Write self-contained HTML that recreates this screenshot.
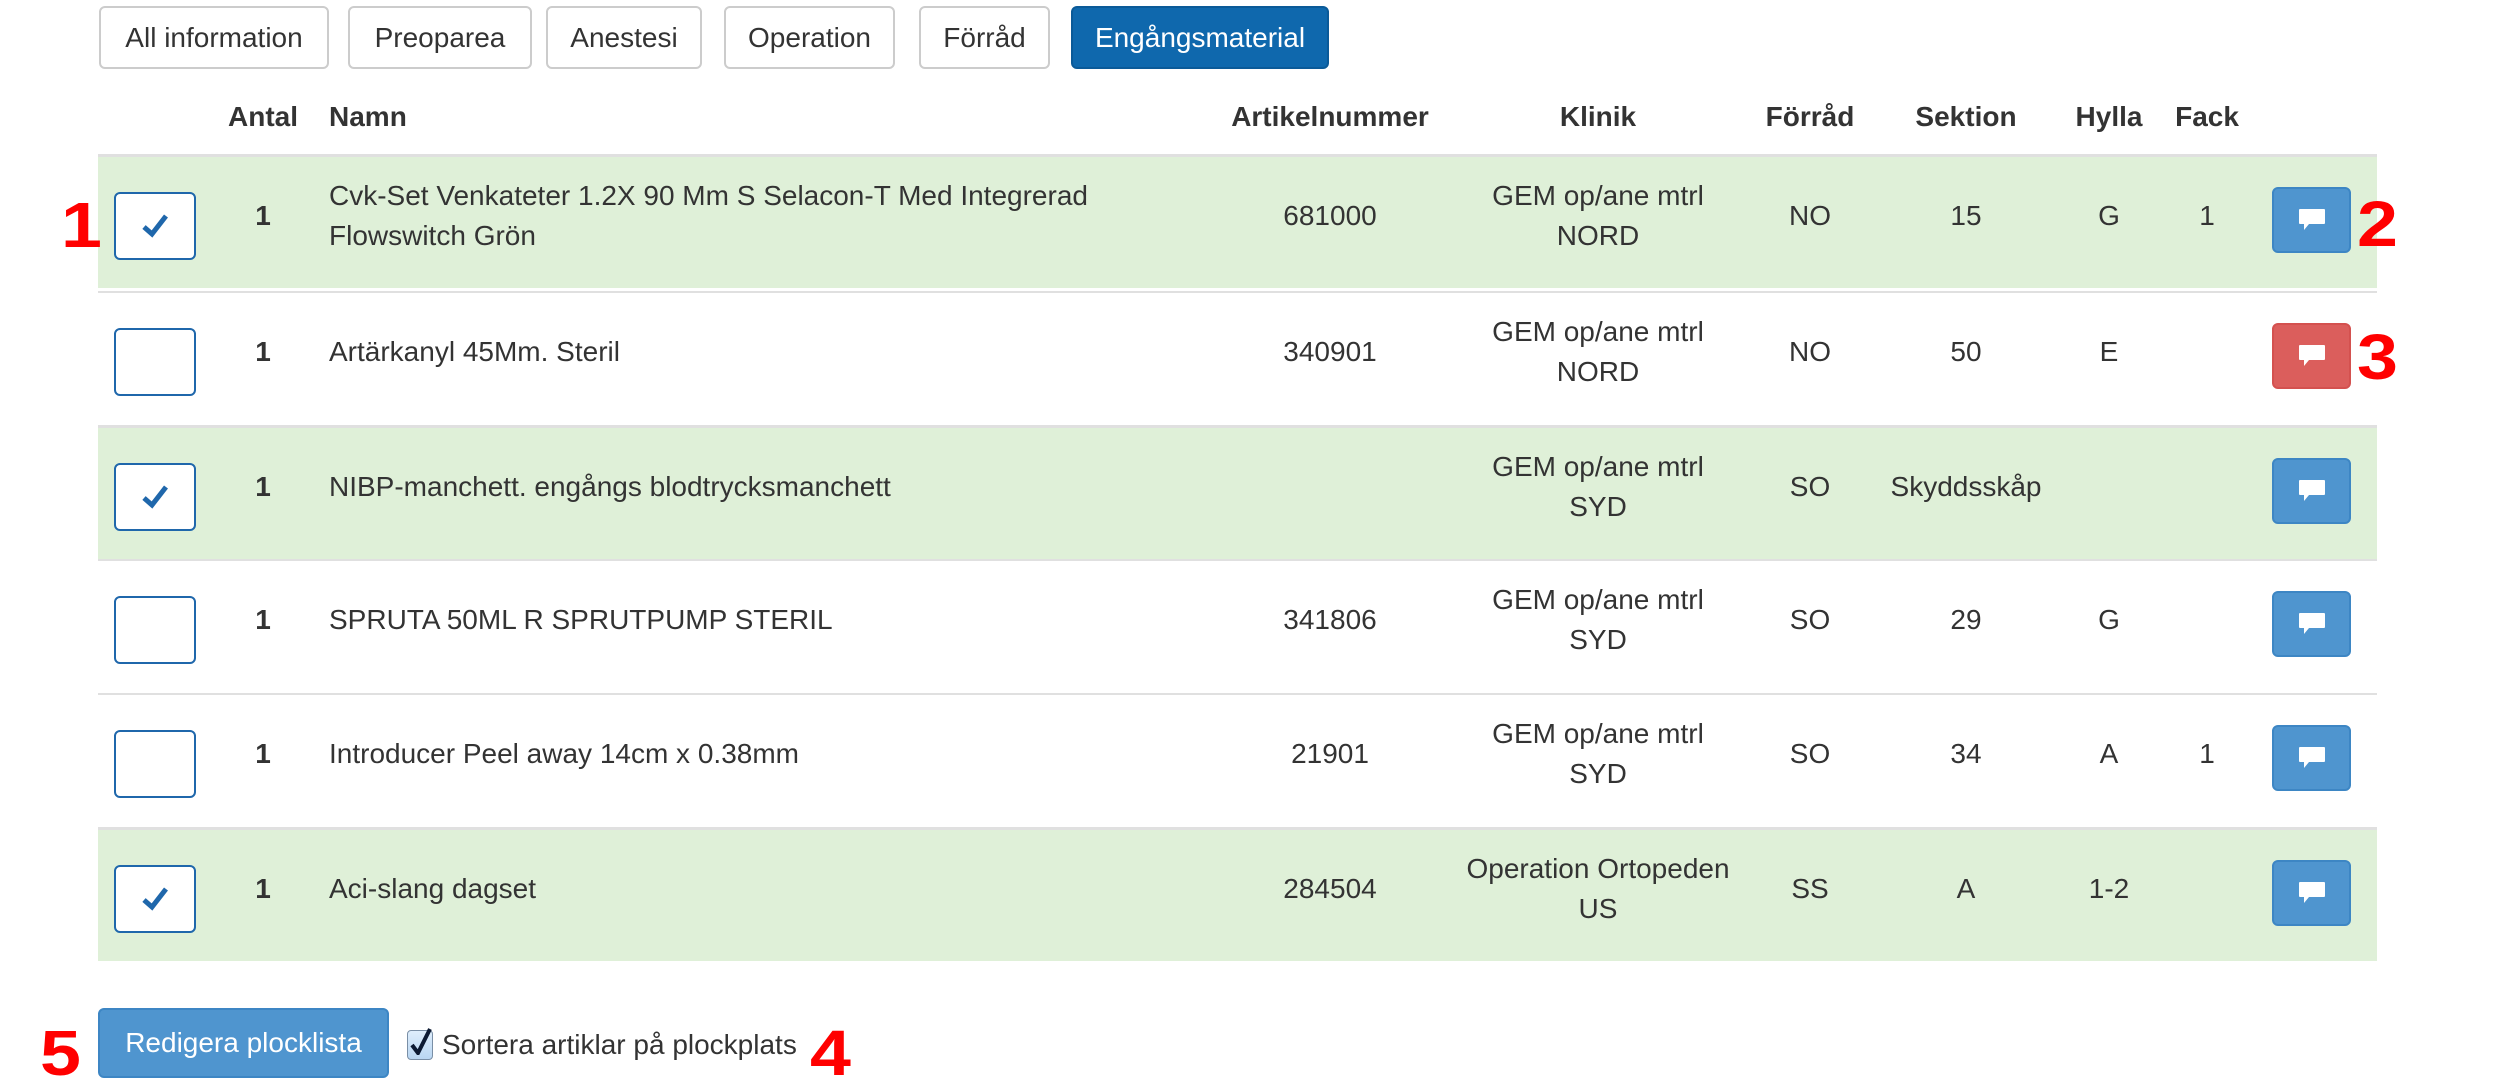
<!DOCTYPE html>
<html><head><meta charset="utf-8"><style>
*{box-sizing:border-box;margin:0;padding:0}
body{width:2518px;height:1092px;background:#fff;font-family:"Liberation Sans",Arial,sans-serif;color:#333;position:relative;overflow:hidden;font-size:28px}
.tab{position:absolute;top:6px;height:63px;border:2px solid #ccc;border-radius:6px;background:#fff;display:flex;align-items:center;justify-content:center;font-size:28px;color:#333}
.tab.on{background:#0f68ad;border-color:#0b5a98;color:#fff}
.h{position:absolute;top:101px;font-weight:bold;font-size:28px;transform:translateX(-50%);white-space:nowrap}
.row{position:absolute;left:98px;width:2279px;height:134px;border-top:3px solid #e0e0e0}
.g{background:#dff0d8}
.c{position:absolute;top:59px;transform:translate(-50%,-50%);text-align:center;white-space:nowrap;line-height:40px}
.nm{position:absolute;left:231px;top:59px;transform:translateY(-50%);line-height:40px;white-space:nowrap}
.cb{position:absolute;left:16px;top:35px;width:82px;height:68px;border:2px solid #1f67ab;border-radius:6px;background:#fff;display:flex;align-items:center;justify-content:center}
.btn{position:absolute;left:2174px;top:30px;width:79px;height:66px;border-radius:6px;background:#4f95cf;border:2px solid #3d86c4;display:flex;align-items:center;justify-content:center}
.btn.r{background:#db5e5c;border-color:#d4514f}
.red{position:absolute;color:#f00;font-weight:bold;font-size:64px;line-height:1;transform:scaleX(1.15);transform-origin:left}
</style></head><body>
<div class="tab" style="left:99px;width:230px">All information</div>
<div class="tab" style="left:348px;width:184px">Preoparea</div>
<div class="tab" style="left:546px;width:156px">Anestesi</div>
<div class="tab" style="left:724px;width:171px">Operation</div>
<div class="tab" style="left:919px;width:131px">Förråd</div>
<div class="tab on" style="left:1071px;width:258px">Engångsmaterial</div>

<div class="h" style="left:263px">Antal</div>
<div class="h" style="left:329px;transform:none">Namn</div>
<div class="h" style="left:1330px">Artikelnummer</div>
<div class="h" style="left:1598px">Klinik</div>
<div class="h" style="left:1810px">Förråd</div>
<div class="h" style="left:1966px">Sektion</div>
<div class="h" style="left:2109px">Hylla</div>
<div class="h" style="left:2207px">Fack</div>

<div class="row g" style="top:154px">
<div class="cb"><svg width="30" height="30" viewBox="0 0 30 30"><path d="M4 16 L12 23 L26 5" fill="none" stroke="#1f67ab" stroke-width="5"/></svg></div>
<div class="c" style="left:165px;font-weight:bold">1</div>
<div class="nm">Cvk-Set Venkateter 1.2X 90 Mm S Selacon-T Med Integrerad<br>Flowswitch Grön</div>
<div class="c" style="left:1232px">681000</div>
<div class="c" style="left:1500px">GEM op/ane mtrl<br>NORD</div>
<div class="c" style="left:1712px">NO</div>
<div class="c" style="left:1868px">15</div>
<div class="c" style="left:2011px">G</div>
<div class="c" style="left:2109px">1</div>
<div class="btn"><svg width="30" height="28" viewBox="0 0 30 28"><path d="M3 3 H27 Q28 3 28 4 V17 Q28 18 27 18 H12 L7 24 V18 H3 Q2 18 2 17 V4 Q2 3 3 3Z" fill="#fff"/></svg></div>
</div>
<div class="row" style="top:291px;border-top-width:2px">
<div class="cb"></div>
<div class="c" style="left:165px;font-weight:bold">1</div>
<div class="nm">Artärkanyl 45Mm. Steril</div>
<div class="c" style="left:1232px">340901</div>
<div class="c" style="left:1500px">GEM op/ane mtrl<br>NORD</div>
<div class="c" style="left:1712px">NO</div>
<div class="c" style="left:1868px">50</div>
<div class="c" style="left:2011px">E</div>
<div class="btn r"><svg width="30" height="28" viewBox="0 0 30 28"><path d="M3 3 H27 Q28 3 28 4 V17 Q28 18 27 18 H12 L7 24 V18 H3 Q2 18 2 17 V4 Q2 3 3 3Z" fill="#fff"/></svg></div>
</div>
<div class="row g" style="top:425px">
<div class="cb"><svg width="30" height="30" viewBox="0 0 30 30"><path d="M4 16 L12 23 L26 5" fill="none" stroke="#1f67ab" stroke-width="5"/></svg></div>
<div class="c" style="left:165px;font-weight:bold">1</div>
<div class="nm">NIBP-manchett. engångs blodtrycksmanchett</div>
<div class="c" style="left:1500px">GEM op/ane mtrl<br>SYD</div>
<div class="c" style="left:1712px">SO</div>
<div class="c" style="left:1868px">Skyddsskåp</div>
<div class="btn"><svg width="30" height="28" viewBox="0 0 30 28"><path d="M3 3 H27 Q28 3 28 4 V17 Q28 18 27 18 H12 L7 24 V18 H3 Q2 18 2 17 V4 Q2 3 3 3Z" fill="#fff"/></svg></div>
</div>
<div class="row" style="top:559px;border-top-width:2px">
<div class="cb"></div>
<div class="c" style="left:165px;font-weight:bold">1</div>
<div class="nm">SPRUTA 50ML R SPRUTPUMP STERIL</div>
<div class="c" style="left:1232px">341806</div>
<div class="c" style="left:1500px">GEM op/ane mtrl<br>SYD</div>
<div class="c" style="left:1712px">SO</div>
<div class="c" style="left:1868px">29</div>
<div class="c" style="left:2011px">G</div>
<div class="btn"><svg width="30" height="28" viewBox="0 0 30 28"><path d="M3 3 H27 Q28 3 28 4 V17 Q28 18 27 18 H12 L7 24 V18 H3 Q2 18 2 17 V4 Q2 3 3 3Z" fill="#fff"/></svg></div>
</div>
<div class="row" style="top:693px;border-top-width:2px">
<div class="cb"></div>
<div class="c" style="left:165px;font-weight:bold">1</div>
<div class="nm">Introducer Peel away 14cm x 0.38mm</div>
<div class="c" style="left:1232px">21901</div>
<div class="c" style="left:1500px">GEM op/ane mtrl<br>SYD</div>
<div class="c" style="left:1712px">SO</div>
<div class="c" style="left:1868px">34</div>
<div class="c" style="left:2011px">A</div>
<div class="c" style="left:2109px">1</div>
<div class="btn"><svg width="30" height="28" viewBox="0 0 30 28"><path d="M3 3 H27 Q28 3 28 4 V17 Q28 18 27 18 H12 L7 24 V18 H3 Q2 18 2 17 V4 Q2 3 3 3Z" fill="#fff"/></svg></div>
</div>
<div class="row g" style="top:827px;height:134px">
<div class="cb"><svg width="30" height="30" viewBox="0 0 30 30"><path d="M4 16 L12 23 L26 5" fill="none" stroke="#1f67ab" stroke-width="5"/></svg></div>
<div class="c" style="left:165px;font-weight:bold">1</div>
<div class="nm">Aci-slang dagset</div>
<div class="c" style="left:1232px">284504</div>
<div class="c" style="left:1500px">Operation Ortopeden<br>US</div>
<div class="c" style="left:1712px">SS</div>
<div class="c" style="left:1868px">A</div>
<div class="c" style="left:2011px">1-2</div>
<div class="btn"><svg width="30" height="28" viewBox="0 0 30 28"><path d="M3 3 H27 Q28 3 28 4 V17 Q28 18 27 18 H12 L7 24 V18 H3 Q2 18 2 17 V4 Q2 3 3 3Z" fill="#fff"/></svg></div>
</div>

<div class="red" style="left:61px;top:193px">1</div>
<div class="red" style="left:2357px;top:192px">2</div>
<div class="red" style="left:2357px;top:325px">3</div>
<div class="red" style="left:40px;top:1021px">5</div>
<div class="red" style="left:810px;top:1021px">4</div>

<div style="position:absolute;left:98px;top:1008px;width:291px;height:70px;background:#4f95cf;border:2px solid #3d86c4;border-radius:6px;color:#fff;display:flex;align-items:center;justify-content:center;font-size:28px">Redigera plocklista</div>
<div style="position:absolute;left:407px;top:1030px;width:26px;height:30px;border:1px solid #7a8fa6;border-radius:4px;background:linear-gradient(#dfeefc,#b9d6f2)"><svg width="26" height="30" viewBox="0 0 26 30" style="position:absolute;left:0;top:-6px"><path d="M4 20 L10 28 L22 4" fill="none" stroke="#0c1a33" stroke-width="4"/></svg></div>
<div style="position:absolute;left:442px;top:1029px;font-size:28px;line-height:32px">Sortera artiklar på plockplats</div>
</body></html>
